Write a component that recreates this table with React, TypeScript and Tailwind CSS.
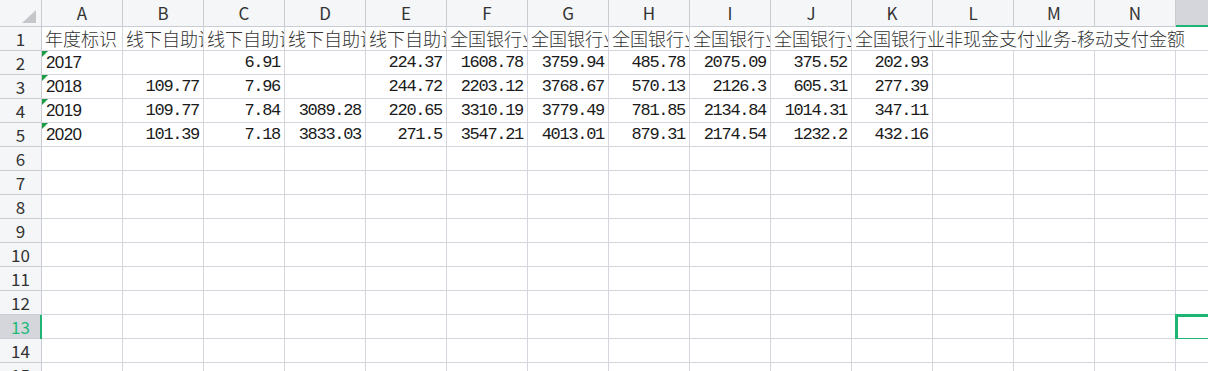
import React from "react";

const COLS = ["A", "B", "C", "D", "E", "F", "G", "H", "I", "J", "K", "L", "M", "N", "O"];

const HEAD_B = "线下自助设备业务笔数";
const HEAD_F = "全国银行业非现金支付业务";

const TITLES: string[] = [
  "年度标识",
  HEAD_B,
  HEAD_B,
  HEAD_B,
  HEAD_B,
  HEAD_F,
  HEAD_F,
  HEAD_F,
  HEAD_F,
  HEAD_F,
  "全国银行业非现金支付业务-移动支付金额",
];

const DATA: string[][] = [
  ["2017", "", "6.91", "", "224.37", "1608.78", "3759.94", "485.78", "2075.09", "375.52", "202.93"],
  ["2018", "109.77", "7.96", "", "244.72", "2203.12", "3768.67", "570.13", "2126.3", "605.31", "277.39"],
  ["2019", "109.77", "7.84", "3089.28", "220.65", "3310.19", "3779.49", "781.85", "2134.84", "1014.31", "347.11"],
  ["2020", "101.39", "7.18", "3833.03", "271.5", "3547.21", "4013.01", "879.31", "2174.54", "1232.2", "432.16"],
];

const ROWS = 15;
const SEL_ROW = 13;
const SEL_COL = 14; // O

const cjk = { fontFamily: '"Noto Sans CJK SC", "Noto Sans", sans-serif' };
const mono = { fontFamily: '"Liberation Mono", "DejaVu Sans Mono", monospace' };
const sans = { fontFamily: '"Liberation Sans", Arial, sans-serif' };

function HeaderCell({ label, selected }: { label: string; selected: boolean }) {
  return (
    <div
      className={
        "relative border-r border-b border-[#c9ccd3] text-center text-[17px] leading-[26px] text-[#333] " +
        (selected ? "bg-[#d4d6db]" : "bg-[#f5f6f8]")
      }
      style={cjk}
    >
      {label}
      {selected && <div className="absolute left-0 right-0 -bottom-px h-[2px] bg-[#20b474]" />}
    </div>
  );
}

function RowHead({ n }: { n: number }) {
  const sel = n === SEL_ROW;
  return (
    <div
      className={
        "relative border-r border-b border-[#c9ccd3] text-center text-[17px] leading-[23px] " +
        (sel ? "bg-[#d4d6db] text-[#21b97a]" : "bg-[#f5f6f8] text-[#333]")
      }
      style={cjk}
    >
      {n}
      {sel && <div className="absolute top-0 -bottom-px -right-px w-[2px] bg-[#20b474]" />}
    </div>
  );
}

function TitleCell({ text, col }: { text: string; col: number }) {
  // K spills over the empty L..N cells, so no gridlines there
  const spill = col >= 10 && col <= 13;
  const isK = col === 10;
  return (
    <div
      className={
        "relative border-b border-[#d3d6dd] bg-white whitespace-nowrap text-[18px] font-light leading-[23px] text-[#333] pl-[3px] " +
        (spill ? "" : "border-r ") +
        (isK ? "overflow-visible z-10" : "overflow-hidden")
      }
      style={cjk}
    >
      {text}
    </div>
  );
}

function DataCell({ value, col, rowNo }: { value: string; col: number; rowNo: number }) {
  const selected = rowNo === SEL_ROW && col === SEL_COL;
  if (col === 0 && value) {
    return (
      <div
        className="relative border-r border-b border-[#d3d6dd] bg-white pl-[4px] text-[17px] leading-[23px] tracking-[-0.6px] text-[#1a1a1a]"
        style={sans}
      >
        <svg className="absolute left-0 top-0" width="6" height="6" viewBox="0 0 6 6">
          <polygon points="0,0 6,0 0,6" fill="#1f9a47" />
        </svg>
        {value}
      </div>
    );
  }
  return (
    <div
      className="relative border-r border-b border-[#d3d6dd] bg-white pr-[4px] text-right text-[17px] leading-[23px] tracking-[-1.3px] text-[#1a1a1a] whitespace-nowrap overflow-visible"
      style={mono}
    >
      {value}
      {selected && (
        <div className="absolute -left-[1px] -top-[1px] h-[27px] w-[83px] border-[3px] border-[#1db574]" />
      )}
    </div>
  );
}

export default function App() {
  const rows = Array.from({ length: ROWS }, (_, i) => i + 1);
  return (
    <div className="relative h-[371px] w-[1208px] overflow-hidden bg-white">
      <div className="grid grid-cols-[42px_repeat(15,81px)] grid-rows-[27px_repeat(15,24px)] w-max">
        {/* corner */}
        <div className="relative border-r border-b border-[#c9ccd3] bg-[#f5f6f8]">
          <svg className="absolute left-[22px] top-[10px]" width="14" height="13" viewBox="0 0 14 13">
            <polygon points="0,13 14,0 14,13" fill="#c4c6ca" />
          </svg>
        </div>
        {COLS.map((c, i) => (
          <HeaderCell key={c} label={c} selected={i === SEL_COL} />
        ))}

        {rows.map((r) => (
          <React.Fragment key={r}>
            <RowHead n={r} />
            {COLS.map((c, ci) => {
              if (r === 1) {
                return <TitleCell key={c} text={TITLES[ci] ?? ""} col={ci} />;
              }
              const v = DATA[r - 2]?.[ci] ?? "";
              return <DataCell key={c} value={v} col={ci} rowNo={r} />;
            })}
          </React.Fragment>
        ))}
      </div>
    </div>
  );
}
